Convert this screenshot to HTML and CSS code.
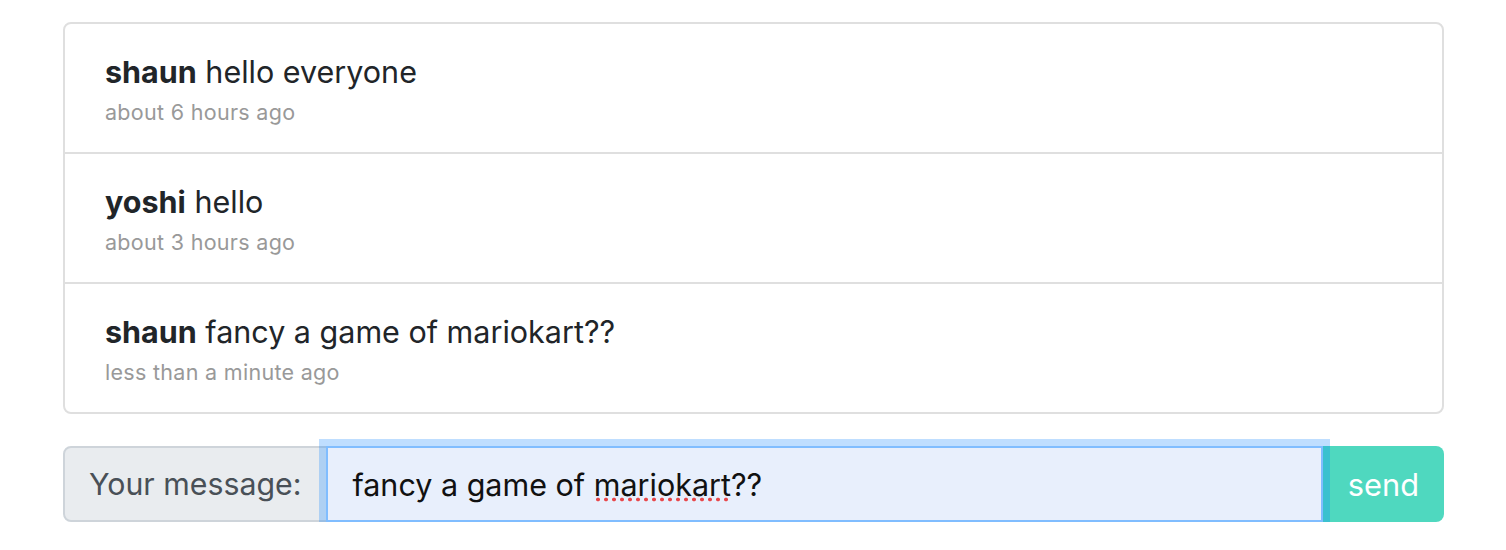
FILE: index.html
```html
<!DOCTYPE html>
<html lang="en">
<head>
<meta charset="utf-8">
<title>Chat</title>
<link rel="stylesheet" href="styles.css">
</head>
<body>
<div class="container">
  <ul class="messages">
    <li class="message">
      <div class="line"><strong>shaun</strong> hello everyone</div>
      <div class="time">about 6 hours ago</div>
    </li>
    <li class="message">
      <div class="line"><strong>yoshi</strong> hello</div>
      <div class="time">about 3 hours ago</div>
    </li>
    <li class="message">
      <div class="line"><strong>shaun</strong> fancy a game of mariokart??</div>
      <div class="time">less than a minute ago</div>
    </li>
  </ul>
  <form class="composer">
    <label class="prepend">Your message:</label>
    <div class="field" role="textbox">fancy a game of <span class="misspelled">mariokart</span>??</div>
    <button type="button" class="send">send</button>
  </form>
</div>
</body>
</html>
```

FILE: styles.css
```css
* { box-sizing: border-box; }
html, body { margin: 0; background: #fff; }
body {
  font-family: Inter, "Noto Sans", sans-serif;
  color: #212529;
}
.container {
  margin: 22px 62px 0 63px;
}
.messages {
  list-style: none;
  margin: 0;
  padding: 0;
  border: 2px solid #dfdfdf;
  border-radius: 8px;
}
.message {
  padding: 24px 40px;
  border-bottom: 2px solid #dfdfdf;
}
.message:last-child { border-bottom: 0; }
.line {
  font-size: 30.5px;
  line-height: 48px;
  color: #212529;
}
.line strong { font-weight: 700; }
.time {
  font-size: 21.5px;
  letter-spacing: 0.3px;
  line-height: 32px;
  color: #999;
}
.composer {
  display: flex;
  margin-top: 32px;
  height: 76px;
}
.prepend {
  display: flex;
  align-items: center;
  padding: 0 25px 0 24px;
  background: #e9ecef;
  border: 2px solid #ced4da;
  border-radius: 8px 0 0 8px;
  color: #495057;
  font-size: 30.3px;
}
.field {
  flex: 1;
  position: relative;
  z-index: 3;
  margin-left: -2px;
  display: flex;
  align-items: center;
  padding: 0 24px;
  background: #e8effc;
  border: 2px solid #80bdff;
  box-shadow: 0 0 0 7px rgba(0, 123, 255, 0.25);
  color: #111;
  font-size: 30.5px;
  white-space: pre;
}
.misspelled {
  background-image: radial-gradient(circle, #e8474a 1.6px, transparent 2.2px);
  background-repeat: repeat-x;
  background-position: 0 100%;
  background-size: 8px 7px;
}
.send {
  width: 121px;
  border: 0;
  border-radius: 0 8px 8px 0;
  background: #4fd8bf;
  color: #fff;
  font-family: inherit;
  font-size: 30.8px;
  padding: 0;
}
```
